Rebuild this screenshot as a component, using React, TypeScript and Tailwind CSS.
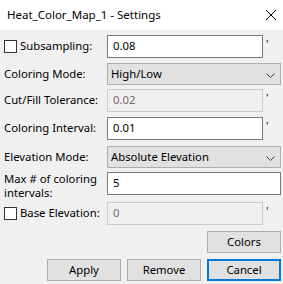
import React from "react";

const font = { fontFamily: '"Noto Sans", "Segoe UI", Arial, sans-serif' };

function Tick() {
  return <span className="w-[18px] self-start pl-[3px] pt-[3px] text-[11px] leading-[11px] text-[#000080]">'</span>;
}

function Chevron() {
  return (
    <svg width="9" height="5" viewBox="0 0 9 5" className="absolute right-[5px] top-[9px]">
      <path d="M0.5 0.5 L4.5 4.5 L8.5 0.5" fill="none" stroke="#404040" strokeWidth="1" />
    </svg>
  );
}

function Checkbox() {
  return <div className="h-[13px] w-[13px] border border-[#333333] bg-white mr-[3px] shrink-0" />;
}

export default function App() {
  return (
    <div className="w-[283px] h-[284px] bg-[#f0f0f0] text-[11.3px] text-black overflow-hidden" style={font}>
      <div className="h-[30px] bg-white flex items-center justify-between pl-[7px] pr-[7px]">
        <span className="text-[11.5px] leading-none">Heat_Color_Map_1 - Settings</span>
        <svg width="10" height="10" viewBox="0 0 10 10">
          <path d="M0 0 L10 10 M10 0 L0 10" stroke="#000" strokeWidth="1" />
        </svg>
      </div>
      <div className="flex flex-col pl-[4px] pr-[2px]">
        <div className="mt-[5px] flex items-center h-[23px]">
          <div className="w-[103px] flex items-center">
            <Checkbox />
            <span>Subsampling:</span>
          </div>
          <div className="h-[23px] w-[156px] border border-[#7a7a7a] bg-white flex items-center pl-[5px]">0.08</div>
          <Tick />
        </div>
        <div className="mt-[5px] flex items-center h-[22px]">
          <div className="w-[103px]">Coloring Mode:</div>
          <div className="relative h-[22px] flex-1 border border-[#adadad] bg-[#e1e1e1] flex items-center pl-[3px]">
            High/Low
            <Chevron />
          </div>
        </div>
        <div className="mt-[4px] flex items-center h-[23px]">
          <div className="w-[103px]">Cut/Fill Tolerance:</div>
          <div className="h-[23px] w-[156px] border border-[#cccccc] bg-[#f0f0f0] text-[#6d6d6d] flex items-center pl-[5px]">0.02</div>
          <Tick />
        </div>
        <div className="mt-[5px] flex items-center h-[23px]">
          <div className="w-[103px]">Coloring Interval:</div>
          <div className="h-[23px] w-[156px] border border-[#7a7a7a] bg-white flex items-center pl-[5px]">0.01</div>
          <Tick />
        </div>
        <div className="mt-[6px] flex items-center h-[22px]">
          <div className="w-[103px]">Elevation Mode:</div>
          <div className="relative h-[22px] flex-1 border border-[#adadad] bg-[#e1e1e1] flex items-center pl-[3px]">
            Absolute Elevation
            <Chevron />
          </div>
        </div>
        <div className="mt-[4px] flex items-start h-[23px]">
          <div className="w-[103px] leading-[14px]">
            <div>Max # of coloring</div>
            <div>intervals:</div>
          </div>
          <div className="h-[23px] flex-1 border border-[#7a7a7a] bg-white flex items-center pl-[5px]">5</div>
        </div>
        <div className="mt-[7px] flex items-center h-[23px]">
          <div className="w-[103px] flex items-center">
            <Checkbox />
            <span>Base Elevation:</span>
          </div>
          <div className="h-[23px] w-[156px] border border-[#cccccc] bg-[#f0f0f0] text-[#6d6d6d] flex items-center pl-[5px]">0</div>
          <Tick />
        </div>
        <div className="mt-[6px] flex justify-end">
          <button className="h-[22px] w-[74px] border border-[#adadad] bg-[#e1e1e1] flex items-center justify-center">Colors</button>
        </div>
        <div className="mt-[6px] flex justify-end gap-[6px]">
          <button className="h-[22px] w-[74px] border border-[#adadad] bg-[#e1e1e1] flex items-center justify-center">Apply</button>
          <button className="h-[22px] w-[74px] border border-[#adadad] bg-[#e1e1e1] flex items-center justify-center">Remove</button>
          <button className="h-[22px] w-[74px] border-2 border-[#0078d7] bg-[#e1e1e1] flex items-center justify-center">Cancel</button>
        </div>
      </div>
    </div>
  );
}
